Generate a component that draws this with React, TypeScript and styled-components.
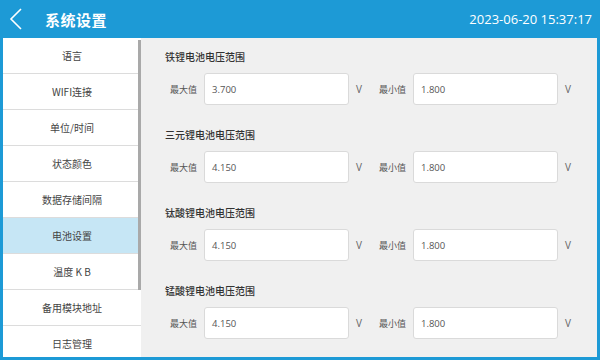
import React from 'react'
import styled, { createGlobalStyle } from 'styled-components'

const GlobalStyle = createGlobalStyle`
  html, body {
    margin: 0;
    padding: 0;
  }
  body {
    font-family: "Noto Sans CJK SC", "Noto Sans", sans-serif;
  }
`

const Screen = styled.div`
  width: 600px;
  height: 360px;
  display: flex;
  flex-direction: column;
  background: #1d9ad6;
  padding: 0 3px 3px 3px;
  box-sizing: border-box;
  overflow: hidden;
`

const Header = styled.header`
  height: 38px;
  flex: none;
  display: flex;
  align-items: center;
  color: #fff;
  margin: 0 -3px;
  padding: 0 8px 0 9px;
`

const BackButton = styled.div`
  width: 14px;
  height: 24px;
  display: flex;
  align-items: center;
`

const Title = styled.h1`
  margin: 0 0 0 22px;
  font-size: 15px;
  font-weight: 700;
  letter-spacing: 0.5px;
  flex: 1;
`

const Clock = styled.div`
  font-family: "Open Sans", "Noto Sans", sans-serif;
  font-size: 13px;
`

const Body = styled.div`
  flex: 1;
  display: flex;
  min-height: 0;
`

const Sidebar = styled.nav`
  position: relative;
  width: 138px;
  flex: none;
  background: #fff;
  overflow: hidden;
`

const MenuItem = styled.div<{ $active?: boolean }>`
  height: 36px;
  display: flex;
  align-items: center;
  justify-content: center;
  box-sizing: border-box;
  border-bottom: 1px solid #dcdcdc;
  font-size: 10px;
  color: #444;
  background: ${p => (p.$active ? '#c6e6f5' : '#fff')};
`

const ScrollThumb = styled.div`
  position: absolute;
  top: 2px;
  right: 0;
  width: 3px;
  height: 250px;
  background: #a9a9a9;
`

const Content = styled.main`
  flex: 1;
  background: #f0f0f0;
  padding: 12px 0 0 24px;
  display: flex;
  flex-direction: column;
  gap: 23px;
`

const Group = styled.section`
  display: flex;
  flex-direction: column;
  gap: 9px;
`

const GroupTitle = styled.div`
  font-size: 10px;
  line-height: 14px;
  font-weight: 500;
  color: #333;
`

const Row = styled.div`
  display: flex;
  align-items: center;
  padding-left: 5px;
`

const Label = styled.span<{ $gap?: number }>`
  font-size: 9px;
  color: #555;
  margin-left: ${p => p.$gap ?? 0}px;
  margin-right: 7px;
`

const Field = styled.div`
  width: 145px;
  height: 32px;
  box-sizing: border-box;
  background: #fff;
  border: 1px solid #dadada;
  border-radius: 3px;
  display: flex;
  align-items: center;
  padding-left: 7px;
  font-family: "Open Sans", "Noto Sans", sans-serif;
  font-size: 9.5px;
  color: #555;
`

const Unit = styled.span`
  font-family: "Open Sans", "Noto Sans", sans-serif;
  font-size: 10px;
  color: #666;
  margin-left: 7px;
`

const menu = ['语言', 'WIFI连接', '单位/时间', '状态颜色', '数据存储间隔', '电池设置', '温度 K B', '备用模块地址', '日志管理']

const groups = [
  { title: '铁锂电池电压范围', max: '3.700', min: '1.800' },
  { title: '三元锂电池电压范围', max: '4.150', min: '1.800' },
  { title: '钛酸锂电池电压范围', max: '4.150', min: '1.800' },
  { title: '锰酸锂电池电压范围', max: '4.150', min: '1.800' },
]

export default function App() {
  return (
    <>
      <GlobalStyle />
      <Screen>
        <Header>
          <BackButton>
            <svg width="14" height="24" viewBox="0 0 14 24">
              <path d="M12 2 L2 12 L12 22" fill="none" stroke="#fff" strokeWidth="1.6" />
            </svg>
          </BackButton>
          <Title>系统设置</Title>
          <Clock>2023-06-20 15:37:17</Clock>
        </Header>
        <Body>
          <Sidebar>
            {menu.map(m => (
              <MenuItem key={m} $active={m === '电池设置'}>
                {m}
              </MenuItem>
            ))}
            <ScrollThumb />
          </Sidebar>
          <Content>
            {groups.map(g => (
              <Group key={g.title}>
                <GroupTitle>{g.title}</GroupTitle>
                <Row>
                  <Label>最大值</Label>
                  <Field>{g.max}</Field>
                  <Unit>V</Unit>
                  <Label $gap={17}>最小值</Label>
                  <Field>{g.min}</Field>
                  <Unit>V</Unit>
                </Row>
              </Group>
            ))}
          </Content>
        </Body>
      </Screen>
    </>
  )
}
